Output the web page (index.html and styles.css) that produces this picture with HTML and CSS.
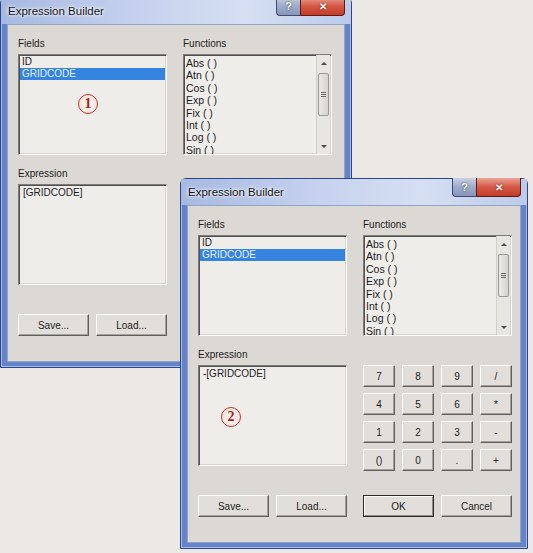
FILE: index.html
```html
<!doctype html>
<html lang="en">
<head>
  <meta charset="UTF-8">
  <title>Expression Builder</title>
  <meta name="viewport" content="width=device-width, initial-scale=1.0">
  <link rel="stylesheet" href="styles.css">
</head>
<body>

<div class="desktop">

  <!-- window 1 (behind, the right half is covered) -->
  <div class="window win-back">
    <div class="titlebar">
      <span class="title">Expression Builder</span>
      <div class="caption">
        <span class="cap help">?</span>
        <span class="cap close">&#x2715;</span>
      </div>
    </div>
    <div class="client">
      <div class="row">
        <div class="col">
          <div class="label">Fields</div>
          <div class="listbox fields">
            <div class="item">ID</div>
            <div class="item selected">GRIDCODE</div>
            <span class="marker m1">1</span>
          </div>
        </div>
        <div class="col">
          <div class="label">Functions</div>
          <div class="listbox functions">
            <div class="fn-items">
              <div class="fn">Abs ( )</div>
              <div class="fn">Atn ( )</div>
              <div class="fn">Cos ( )</div>
              <div class="fn">Exp ( )</div>
              <div class="fn">Fix ( )</div>
              <div class="fn">Int ( )</div>
              <div class="fn">Log ( )</div>
              <div class="fn">Sin ( )</div>
            </div>
            <div class="scrollbar">
              <div class="arrow"><i class="up"></i></div>
              <div class="thumb"><i class="grip"></i></div>
              <div class="arrow bottom"><i class="down"></i></div>
            </div>
          </div>
        </div>
      </div>
      <div class="row expr-row">
        <div class="col">
          <div class="label">Expression</div>
          <div class="listbox textbox">[GRIDCODE]</div>
        </div>
        <div class="col keypad-col">
          <div class="keypad-space"></div>
        </div>
      </div>
      <div class="row buttons">
        <div class="pair"><button class="btn">Save...</button><button class="btn">Load...</button></div>
      </div>
    </div>
  </div>

  <!-- window 2 (front) -->
  <div class="window win-front">
    <div class="titlebar">
      <span class="title">Expression Builder</span>
      <div class="caption">
        <span class="cap help">?</span>
        <span class="cap close">&#x2715;</span>
      </div>
    </div>
    <div class="client">
      <div class="row">
        <div class="col">
          <div class="label">Fields</div>
          <div class="listbox fields">
            <div class="item">ID</div>
            <div class="item selected">GRIDCODE</div>
          </div>
        </div>
        <div class="col">
          <div class="label">Functions</div>
          <div class="listbox functions">
            <div class="fn-items">
              <div class="fn">Abs ( )</div>
              <div class="fn">Atn ( )</div>
              <div class="fn">Cos ( )</div>
              <div class="fn">Exp ( )</div>
              <div class="fn">Fix ( )</div>
              <div class="fn">Int ( )</div>
              <div class="fn">Log ( )</div>
              <div class="fn">Sin ( )</div>
            </div>
            <div class="scrollbar">
              <div class="arrow"><i class="up"></i></div>
              <div class="thumb"><i class="grip"></i></div>
              <div class="arrow bottom"><i class="down"></i></div>
            </div>
          </div>
        </div>
      </div>
      <div class="row expr-row">
        <div class="col">
          <div class="label">Expression</div>
          <div class="listbox textbox">-[GRIDCODE]
            <span class="marker m2">2</span>
          </div>
        </div>
        <div class="col keypad-col">
          <div class="keypad">
            <button class="btn">7</button><button class="btn">8</button><button class="btn">9</button><button class="btn">/</button>
            <button class="btn">4</button><button class="btn">5</button><button class="btn">6</button><button class="btn">*</button>
            <button class="btn">1</button><button class="btn">2</button><button class="btn">3</button><button class="btn">-</button>
            <button class="btn">()</button><button class="btn">0</button><button class="btn">.</button><button class="btn">+</button>
          </div>
        </div>
      </div>
      <div class="row buttons">
        <div class="pair"><button class="btn">Save...</button><button class="btn">Load...</button></div>
        <div class="pair"><button class="btn default">OK</button><button class="btn">Cancel</button></div>
      </div>
    </div>
  </div>

</div>

</body>
</html>
```

FILE: styles.css
```css
body {
  margin: 0;
  background: #ebe8e5;
  font-family: "Liberation Sans", Arial, sans-serif;
  font-size: 10px;
  color: #1c1c1c;
}
.desktop {
  position: relative;
  width: 533px;
  height: 553px;
  overflow: hidden;
}

/* window frame */
.window {
  position: absolute;
  box-sizing: border-box;
  border: 1px solid #2b4788;
  border-radius: 6px 6px 0 0;
  padding: 0 6px 5px;
  background: linear-gradient(to bottom, #b4c3e6 0, #b4c3e6 26px, #6583c9 26px);
  box-shadow: inset 0 0 0 1px #a7bbe6;
}
.win-back { left: 0; top: -3px; width: 352px; }
.win-front { left: 180px; top: 178px; width: 348px; }

.titlebar {
  height: 26px;
  display: flex;
  align-items: center;
  margin: 0 -6px;
  padding: 0 6px 0 7px;
  background: linear-gradient(to right, #a7b9e1, #c6d2ee 40%, #d6dff2 70%, #bccbeb);
}
.title {
  font-size: 11.5px;
  color: #151515;
  text-shadow: 0 0 5px #fff, 0 0 3px #fff;
}
.caption {
  margin-left: auto;
  align-self: flex-start;
  margin-top: -1px;
  display: flex;
}
.cap {
  height: 18px;
  display: flex;
  align-items: center;
  justify-content: center;
  border: 1px solid #3d4d72;
  border-top: none;
  font-weight: bold;
  color: #fff;
}
.help {
  width: 23px;
  border-radius: 0 0 0 4px;
  border-right: none;
  font-size: 11px;
  background: linear-gradient(#c9d2e4, #9eabc8 50%, #8796ba);
  text-shadow: 0 0 2px #1d2a48;
}
.close {
  width: 43px;
  border-color: #5e1a12;
  border-radius: 0 0 4px 0;
  font-size: 10px;
  background: linear-gradient(#e9a597, #d55744 50%, #c23c2c);
  text-shadow: 0 0 2px #5e1a12;
}

/* client area */
.client {
  background: #dcd9d4;
  border: 1px solid #93a4c9;
  padding: 13px 0 25px 10px;
}
.row {
  display: grid;
  grid-template-columns: 149px 149px;
  column-gap: 16px;
}
.expr-row { margin-top: 13px; }
.buttons { margin-top: 24px; }
.label {
  line-height: 12px;
  margin-bottom: 4px;
}

.listbox {
  position: relative;
  box-sizing: border-box;
  height: 101px;
  background: #efedea;
  border: 1px solid;
  border-color: #7c7c7c #fbfbfb #fbfbfb #7c7c7c;
  box-shadow: inset 1px 1px 0 #505050, inset -1px -1px 0 #d6d3cf;
  overflow: hidden;
}
.fields { padding: 1px 1px 0; }
.item {
  line-height: 12px;
  padding-left: 2px;
}
.item.selected {
  background: #3484e0;
  color: #e6f1ff;
}

.functions { display: flex; }
.fn-items {
  flex: 1;
  padding: 2px 0 0 2px;
  font-size: 10.5px;
}
.fn { line-height: 12.4px; }

.scrollbar {
  width: 13px;
  display: flex;
  flex-direction: column;
  align-items: center;
  background: #e8e6e3;
  border-left: 1px solid #d3d0cb;
  margin-right: 1px;
}
.arrow {
  height: 16px;
  display: flex;
  align-items: center;
  justify-content: center;
}
.arrow.bottom { margin-top: auto; }
.up, .down {
  width: 0;
  height: 0;
  border-left: 3px solid transparent;
  border-right: 3px solid transparent;
}
.up { border-bottom: 3px solid #4a4a4a; }
.down { border-top: 3px solid #4a4a4a; }
.thumb {
  box-sizing: border-box;
  width: 11px;
  height: 43px;
  margin-top: 2px;
  border: 1px solid #979797;
  border-radius: 2px;
  background: linear-gradient(to right, #eceae7, #d6d3ce);
  display: flex;
  align-items: center;
  justify-content: center;
}
.grip {
  width: 5px;
  height: 5px;
  background: repeating-linear-gradient(to bottom, #6a6a6a 0, #6a6a6a 1px, transparent 1px, transparent 2px);
}

.textbox {
  padding: 2px 4px;
  line-height: 12px;
}

.marker {
  position: absolute;
  box-sizing: border-box;
  width: 20px;
  height: 20px;
  border: 1.5px solid #c2372a;
  border-radius: 50%;
  background: radial-gradient(#fff6f4, #f3dcd8);
  display: flex;
  align-items: center;
  justify-content: center;
  font-family: "Liberation Serif", serif;
  font-weight: bold;
  font-size: 14px;
  color: #a91e14;
}
.m1 { left: 59px; top: 39px; }
.m2 { left: 22px; top: 41px; }

/* keypad and buttons */
.keypad-col { padding-top: 16px; }
.keypad, .keypad-space {
  display: grid;
  grid-template-columns: repeat(4, 32px);
  grid-auto-rows: 22px;
  column-gap: 7px;
  row-gap: 6px;
}
.keypad-space { height: 106px; }
.pair {
  display: grid;
  grid-template-columns: 71px 71px;
  column-gap: 7px;
}
.pair .btn { height: 22px; }

.btn {
  box-sizing: border-box;
  padding: 0;
  font-family: inherit;
  font-size: 10px;
  color: #1c1c1c;
  background: #e2dfda;
  border: 1px solid;
  border-color: #fdfdfd #5f5f5f #5f5f5f #fdfdfd;
  box-shadow: inset -1px -1px 0 #a5a29d;
  border-radius: 0;
}
.btn.default {
  border-color: #2a2a2a;
  box-shadow: inset 1px 1px 0 #fdfdfd, inset -1px -1px 0 #8f8c87;
}
```
